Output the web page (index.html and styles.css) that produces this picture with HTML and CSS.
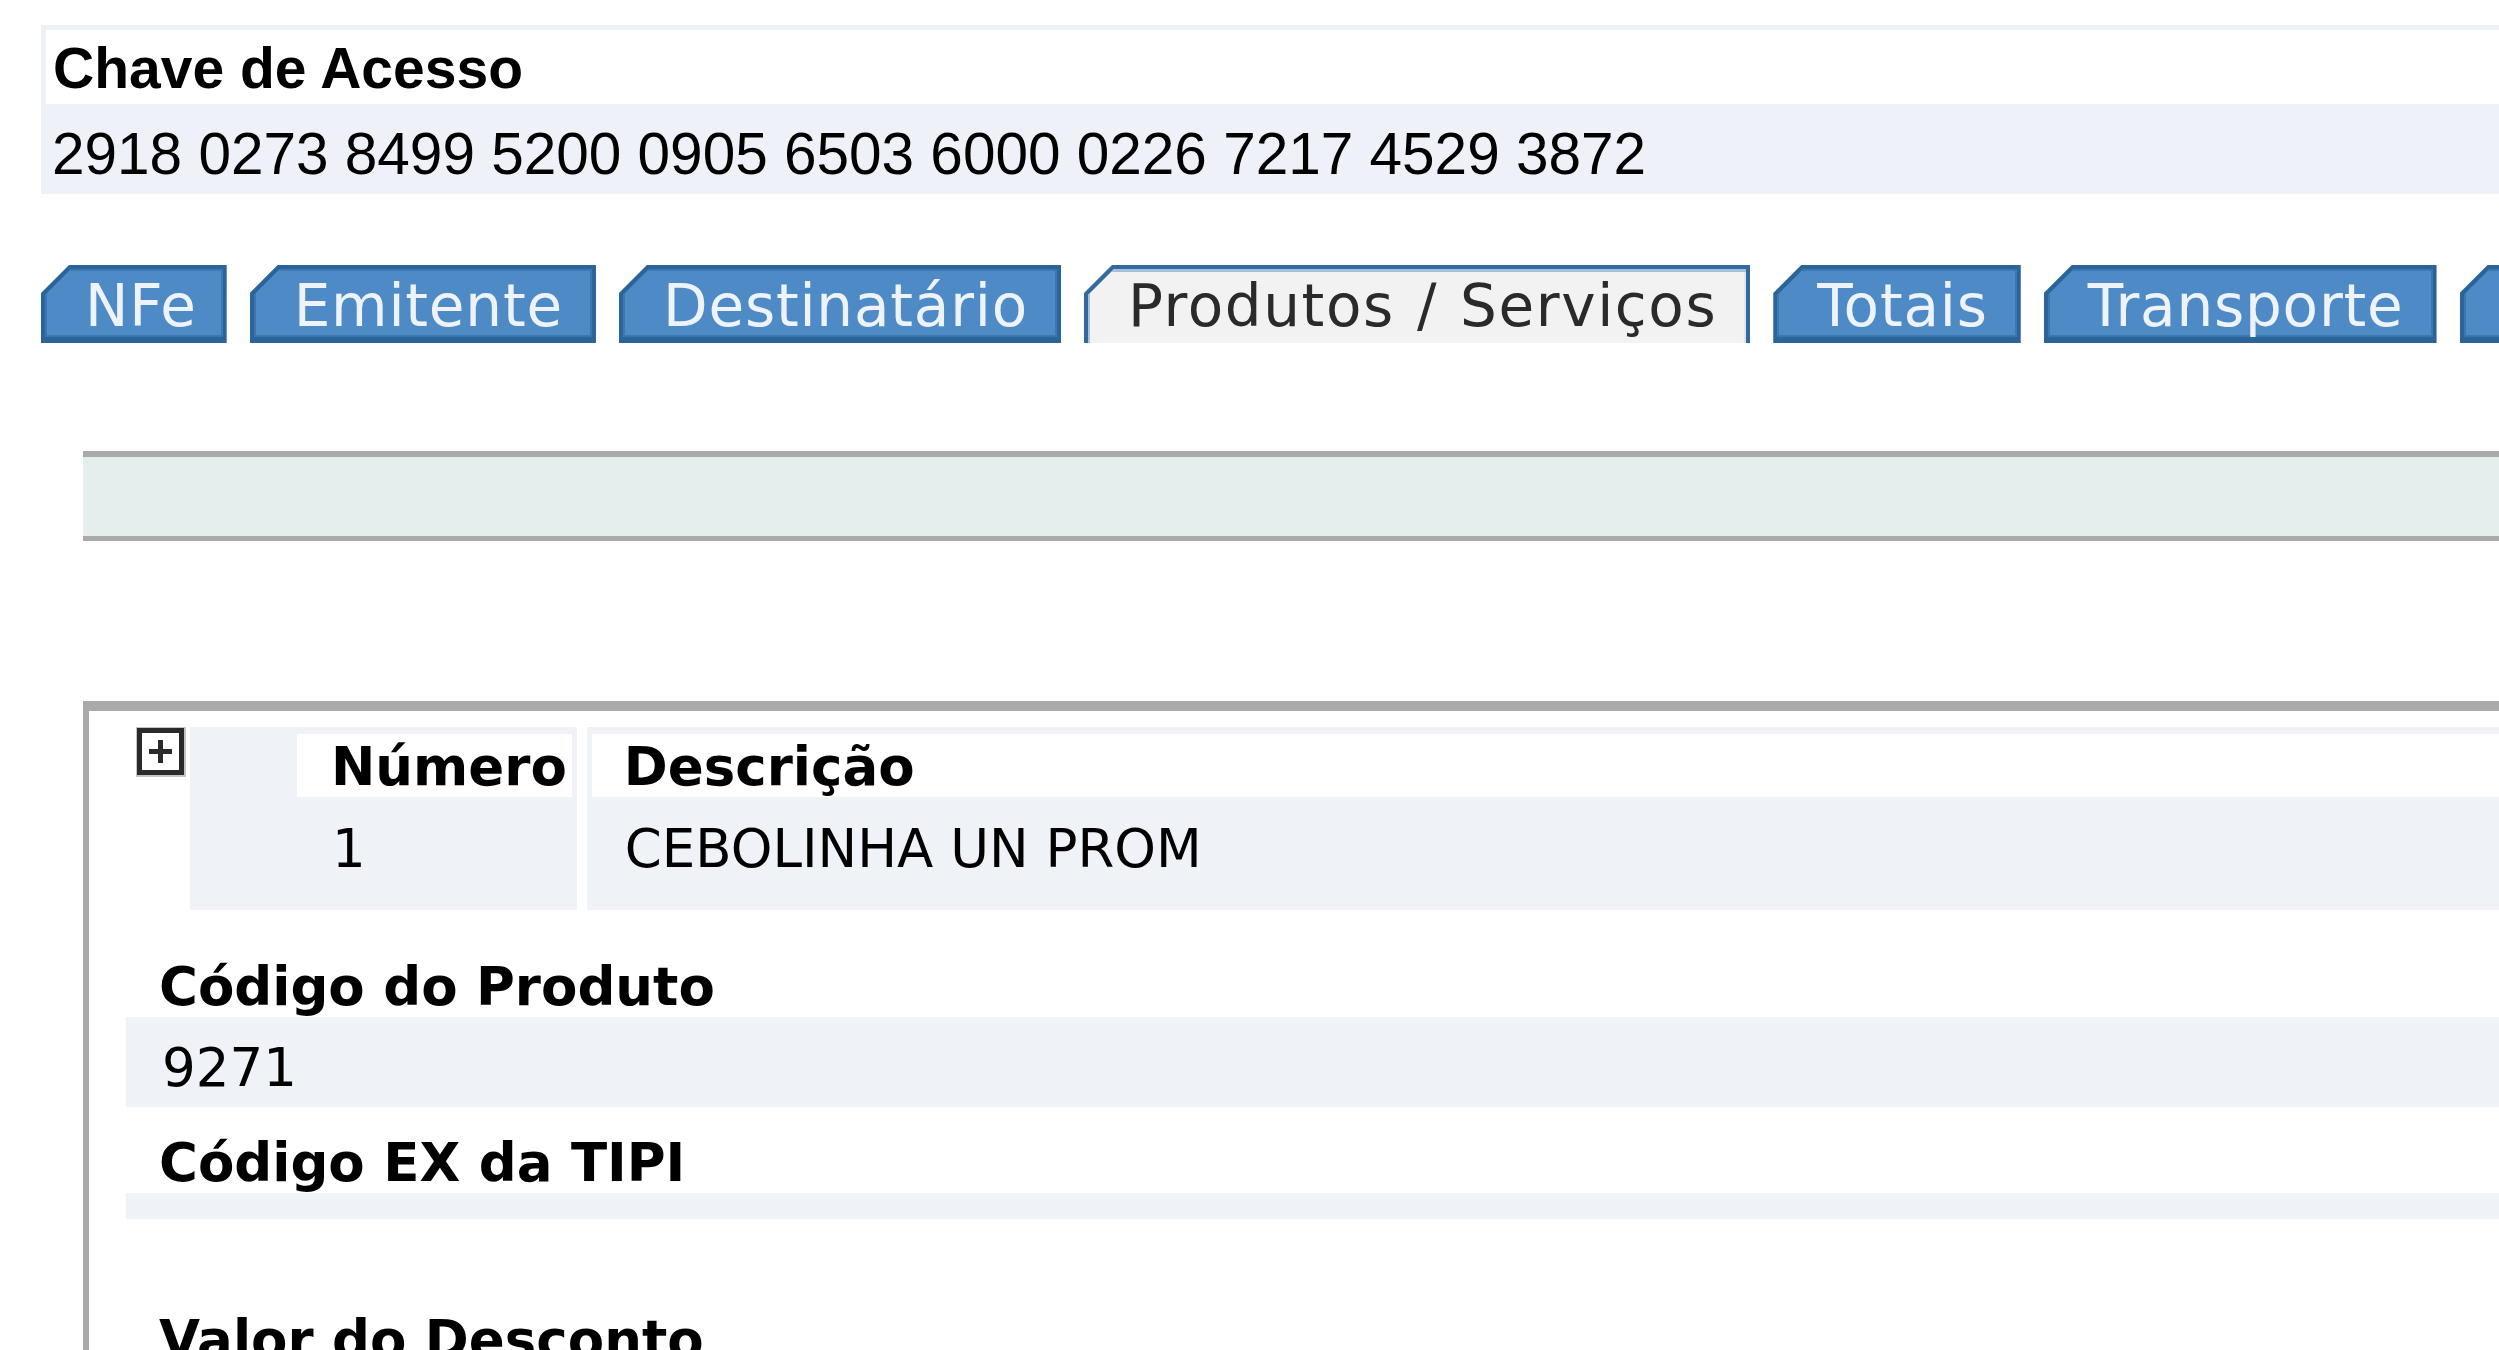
FILE: index.html
```html
<!DOCTYPE html>
<html lang="pt-BR">
<head>
<meta charset="utf-8">
<title>NF-e - Produtos / Serviços</title>
<link rel="stylesheet" href="styles.css">
</head>
<body>
<div class="page">
  <div class="key-box">
    <div class="key-label">Chave de Acesso</div>
    <div class="key-value">2918 0273 8499 5200 0905 6503 6000 0226 7217 4529 3872</div>
  </div>

  <nav class="tabs">
    <div class="tab tab-nfe"><span class="tab-label">NFe</span></div>
    <div class="tab"><span class="tab-label">Emitente</span></div>
    <div class="tab"><span class="tab-label">Destinatário</span></div>
    <div class="tab tab-active"><span class="tab-label">Produtos / Serviços</span></div>
    <div class="tab"><span class="tab-label">Totais</span></div>
    <div class="tab"><span class="tab-label">Transporte</span></div>
    <div class="tab"><span class="tab-label">Cobrança</span></div>
  </nav>

  <div class="bar"></div>

  <section class="product">
    <div class="prod-head">
      <svg class="toggle" width="50" height="50" viewBox="0 0 50 50" aria-hidden="true">
        <rect x="3" y="3" width="44" height="44" fill="#ffffff" stroke="#c4c4c4" stroke-width="6"/>
        <rect x="3.5" y="3.5" width="42" height="42" fill="#ffffff" stroke="#2a2a2a" stroke-width="5"/>
        <path d="M24.5 13v23M13 24.5h23" stroke="#2a2a2a" stroke-width="5" fill="none"/>
      </svg>
      <div class="panel panel-num">
        <div class="cell-head">Número</div>
        <div class="cell-val">1</div>
      </div>
      <div class="panel panel-desc">
        <div class="cell-head">Descrição</div>
        <div class="cell-val">CEBOLINHA UN PROM</div>
      </div>
    </div>

    <div class="field">
      <div class="f-label">Código do Produto</div>
      <div class="f-value">9271</div>
    </div>
    <div class="field">
      <div class="f-label">Código EX da TIPI</div>
      <div class="f-value"></div>
    </div>
    <div class="field field-gap">
      <div class="f-label">Valor do Desconto</div>
      <div class="f-value"></div>
    </div>
  </section>
</div>
</body>
</html>
```

FILE: styles.css
```css
html, body {
  margin: 0;
  padding: 0;
  background: #ffffff;
}

body {
  width: 2499px;
  height: 1350px;
  overflow: hidden;
}

.page {
  padding: 25px 0 0 41px;
}

/* ---- Chave de acesso ---- */
.key-box {
  background: #eef2f8;
  padding: 5px 0 5px 5px;
  font-family: "Liberation Sans", Arial, sans-serif;
  color: #000;
}

.key-label {
  background: #ffffff;
  font-weight: bold;
  font-size: 57px;
  line-height: 71px;
  padding: 3px 0 0 7px;
  white-space: nowrap;
}

.key-value {
  font-size: 58.5px;
  line-height: 66px;
  padding: 17px 0 2px 6px;
  white-space: nowrap;
}

/* ---- Tabs ---- */
.tabs {
  display: flex;
  flex-wrap: nowrap;
  gap: 23px;
  margin-top: 71px;
  font-family: "DejaVu Sans", Verdana, sans-serif;
  font-size: 58px;
  letter-spacing: 0.8px;
  white-space: nowrap;
}

.tab {
  flex: none;
  background: #2c6398;
  padding: 4px 4px 6px 4px;
  clip-path: polygon(28px 0, 100% 0, 100% 100%, 0 100%, 0 28px);
}

.tab-label {
  display: block;
  background: #4e8ac5;
  color: #eef3fa;
  padding: 6px 29px 0 40px;
  line-height: 62px;
  box-shadow: inset 0 0 0 2px #3d77b2;
  clip-path: polygon(26px 0, 100% 0, 100% 100%, 0 100%, 0 26px);
}

.tab-nfe .tab-label {
  padding-right: 26px;
}

.tab-active {
  background: #34699f;
  padding: 4px 4px 0 4px;
  letter-spacing: 1.6px;
  word-spacing: 2px;
}

.tab-active .tab-label {
  background: #f2f2f2;
  color: #2a2a2a;
  padding-bottom: 6px;
  box-shadow: inset 0 3px 0 #a7c1dc, inset 2px 0 0 #a7c1dc, inset -2px 0 0 #dfe6ee;
}

/* ---- grey bar ---- */
.bar {
  margin: 108px 0 0 42px;
  height: 79px;
  background: #e5eeed;
  border-top: 6px solid #aaaaaa;
  border-bottom: 5px solid #aaaaaa;
}

/* ---- product box ---- */
.product {
  margin: 160px 0 0 42px;
  border-top: 10px solid #aaaaaa;
  border-left: 6px solid #aaaaaa;
  padding: 16px 0 0 37px;
  min-height: 800px;
  font-family: "DejaVu Sans", Verdana, sans-serif;
  font-size: 53px;
  color: #000;
}

.prod-head {
  display: flex;
  align-items: flex-start;
  padding-left: 10px;
}

.toggle {
  flex: none;
  display: block;
  margin-right: 4px;
}

.panel {
  background: #eff3f8;
  padding: 7px 5px 5px 5px;
}

.panel-num {
  flex: none;
  padding-left: 107px;
}

.panel-desc {
  flex: 1;
  margin-left: 10px;
  padding-right: 0;
}

.cell-head {
  background: #ffffff;
  font-weight: bold;
  line-height: 60px;
  padding: 3px 5px 0 34px;
  white-space: nowrap;
}

.panel-desc .cell-head {
  padding-left: 32px;
}

.cell-val {
  line-height: 64px;
  padding: 20px 5px 24px 35px;
  white-space: nowrap;
}

.panel-desc .cell-val {
  padding-left: 33px;
}

.field {
  margin-top: 25px;
}

.prod-head + .field {
  margin-top: 46px;
}

.field-gap {
  margin-top: 90px;
}

.f-label {
  font-weight: bold;
  line-height: 61px;
  padding-left: 33px;
  white-space: nowrap;
}

.f-value {
  background: #eff3f8;
  line-height: 64px;
  padding: 19px 0 7px 36px;
  white-space: nowrap;
}

.f-value:empty {
  height: 0;
}
```
